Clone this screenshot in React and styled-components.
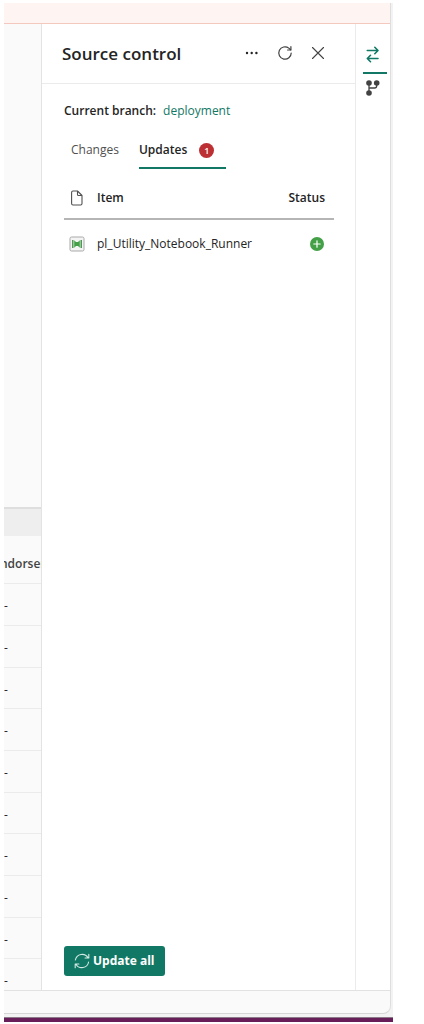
import React, { useState } from 'react';
import styled, { createGlobalStyle } from 'styled-components';

const GlobalStyle = createGlobalStyle`
  *, *::before, *::after {
    box-sizing: border-box;
  }

  body {
    margin: 0;
    background: #ffffff;
    color: #242424;
    font-family: "Open Sans", "Noto Sans", sans-serif;
    font-size: 12px;
    line-height: 16px;
  }

  button {
    font: inherit;
    color: inherit;
    border: 0;
    padding: 0;
    background: none;
    cursor: pointer;
  }
`;

const Page = styled.div`
  min-height: 100vh;
  display: flex;
  flex-direction: column;
  padding: 3px 31px 2px 4px;
`;

const Frame = styled.div`
  flex: 1;
  display: flex;
  flex-direction: column;
  padding: 0 2px 3px 0;
  background: #f3f3f3;
`;

const Window = styled.div`
  flex: 1;
  display: flex;
  flex-direction: column;
  border-right: 1px solid #dedede;
  border-bottom: 1px solid #d6d6d6;
  border-bottom-right-radius: 8px;
  background: #fafafa;
`;

const Banner = styled.div`
  height: 21px;
  background: #fef4f1;
  border-bottom: 1px solid #f3c9bf;
`;

const Body = styled.div`
  flex: 1;
  display: grid;
  grid-template-columns: 37px minmax(0, 1fr) 34px;
  border-bottom: 1px solid #e2e2e2;
`;

const Footer = styled.footer`
  height: 22px;
`;

const Taskbar = styled.div`
  height: 5px;
  background: #671e59;
  border-top: 1px solid #8d7a88;
`;

const Workspace = styled.div`
  display: flex;
  flex-direction: column;
  justify-content: flex-end;
  overflow: hidden;
`;

const Toolbar = styled.div`
  height: 29px;
  background: #eeeeee;
  border-top: 2px solid #dedede;
`;

const List = styled.table`
  width: 100%;
  table-layout: fixed;
  border-collapse: collapse;
`;

const ListHead = styled.th`
  height: 47px;
  padding: 10px 0 0;
  overflow: hidden;
  white-space: nowrap;
  text-align: left;
  text-indent: -4px;
  font-weight: 600;
  color: #424242;
  border-bottom: 1px solid #ebebeb;
`;

const ListRow = styled.tr`
  height: 42px;

  &:nth-child(3n) {
    height: 41px;
  }

  &:last-child {
    height: 32px;
  }
`;

const ListCell = styled.td`
  padding: 14px 0 0;
  vertical-align: top;
  border-bottom: 1px solid #ebebeb;

  ${ListRow}:last-child & {
    border-bottom: 0;
  }
`;

const Panel = styled.section`
  display: flex;
  flex-direction: column;
  background: #ffffff;
  border-left: 1px solid #e3e3e3;
  border-right: 1px solid #ebebeb;
`;

const PanelHeader = styled.header`
  height: 60px;
  display: flex;
  align-items: center;
  justify-content: space-between;
  padding: 0 29px 0 20px;
  border-bottom: 1px solid #ebebeb;
`;

const Title = styled.h2`
  margin: 0;
  font-size: 17px;
  line-height: 24px;
  font-weight: 600;
`;

const Actions = styled.div`
  display: flex;
  gap: 17px;
`;

const IconButton = styled.button`
  width: 16px;
  height: 18px;
  display: flex;
  justify-content: center;
`;

const Content = styled.div`
  flex: 1;
  display: flex;
  flex-direction: column;
  align-items: flex-start;
  padding: 19px 21px 14px 22px;
`;

const Branch = styled.p`
  margin: 0;
  display: flex;
  gap: 7px;
`;

const BranchLabel = styled.span`
  font-weight: 600;
`;

const BranchLink = styled.a`
  color: #117865;
  text-decoration: none;
`;

const Tabs = styled.div`
  display: flex;
  gap: 20px;
  margin-top: 14px;
  padding-left: 7px;
`;

const Tab = styled.button`
  height: 36px;
  display: flex;
  align-items: center;
  gap: 12px;
  padding: ${(props) => (props.$badge ? '0 12px 0 0' : '0')};
  color: ${(props) => (props.$active ? '#242424' : '#505050')};
  font-weight: ${(props) => (props.$active ? 600 : 400)};
  border-bottom: 2px solid ${(props) => (props.$active ? '#117865' : 'transparent')};
`;

const Badge = styled.span`
  width: 15px;
  height: 15px;
  border-radius: 50%;
  background: #bc2f32;
  color: #ffffff;
  font-size: 9px;
  line-height: 15px;
  font-weight: 600;
  text-align: center;
`;

const Items = styled.table`
  width: 100%;
  margin-top: 9px;
  table-layout: fixed;
  border-collapse: collapse;

  th {
    height: 41px;
    padding: 0;
    text-align: left;
    font-weight: 600;
    border-bottom: 2px solid #b5b5b5;
  }

  td {
    height: 48px;
    padding: 0;
  }

  th:first-child,
  td:first-child {
    width: 33px;
    padding-left: 5px;
  }

  th:last-child,
  td:last-child {
    width: 60px;
    padding-right: 9px;
    text-align: right;
  }

  svg {
    display: inline-block;
    vertical-align: middle;
  }
`;

const UpdateButton = styled.button`
  height: 30px;
  display: flex;
  align-items: center;
  gap: 3px;
  margin-top: auto;
  padding: 0 10px;
  border-radius: 3px;
  background: #117865;
  color: #ffffff;
  font-weight: 700;
`;

const Rail = styled.nav`
  display: flex;
  flex-direction: column;
  align-items: center;
  padding-top: 20px;
  padding-left: 4px;
  background: #ffffff;
`;

const RailButton = styled.button`
  width: 24px;
  height: 30px;
  display: flex;
  align-items: flex-start;
  padding: ${(props) => (props.$active ? 1 : 5)}px 0 0 2px;
  color: ${(props) => (props.$active ? '#117865' : '#424242')};
  border-bottom: 2px solid ${(props) => (props.$active ? '#117865' : 'transparent')};
`;

const MoreIcon = () => (
  <svg width="16" height="16" viewBox="0 0 16 16" fill="#242424" aria-hidden="true">
    <circle cx="3" cy="8" r="1.2" />
    <circle cx="7.7" cy="8" r="1.2" />
    <circle cx="12.4" cy="8" r="1.2" />
  </svg>
);

const RefreshIcon = () => (
  <svg width="16" height="16" viewBox="0 0 16 16" fill="none" stroke="#424242" strokeWidth="1.2" aria-hidden="true">
    <path d="M14.2 8A6.2 6.2 0 1 1 11.8 3.1L13.6 4.8" strokeLinecap="round" />
    <path d="M13.9 1.7V5H10.6" strokeLinecap="round" strokeLinejoin="round" />
  </svg>
);

const CloseIcon = () => (
  <svg width="16" height="16" viewBox="0 0 16 16" fill="none" stroke="#424242" strokeWidth="1.1" strokeLinecap="round" aria-hidden="true">
    <path d="M2.5 2.5L13.5 13.5M13.5 2.5L2.5 13.5" />
  </svg>
);

const SwapIcon = () => (
  <svg width="16" height="18" viewBox="0 0 16 18" fill="none" stroke="currentColor" strokeWidth="1.6" strokeLinecap="round" strokeLinejoin="round" aria-hidden="true">
    <path d="M2.3 5.5H12.6M9.8 2.3L13 5.5L9.8 8.7M13 13.5H2.8M5.5 10.3L2.3 13.5L5.5 16.7" />
  </svg>
);

const BranchIcon = () => (
  <svg width="16" height="18" viewBox="0 0 16 18" aria-hidden="true">
    <path d="M4 4V14M4 9H9.5Q11.7 9 11.7 6.8V4" fill="none" stroke="currentColor" strokeWidth="1.3" />
    <circle cx="4" cy="4" r="2.8" fill="currentColor" />
    <circle cx="11.7" cy="4" r="2.8" fill="currentColor" />
    <circle cx="4" cy="14" r="2.8" fill="currentColor" />
  </svg>
);

const FileIcon = () => (
  <svg width="15" height="18" viewBox="0 0 15 18" fill="none" stroke="#505050" strokeWidth="1.1" strokeLinejoin="round" aria-hidden="true">
    <path d="M4 2H8.5L13 6.5V14.6Q13 16 11.6 16H4Q2.6 16 2.6 14.6V3.4Q2.6 2 4 2Z" />
    <path d="M8.5 2V5.4Q8.5 6.5 9.6 6.5H13" />
  </svg>
);

const PipelineIcon = () => (
  <svg width="16" height="16" viewBox="0 0 16 16" aria-hidden="true">
    <rect x="1" y="1" width="14" height="14" rx="1.5" fill="#f4f4f4" stroke="#a9a9a9" />
    <path d="M3.8 4V12M12.2 4V12" stroke="#2f8a35" strokeWidth="1.3" />
    <path d="M5.2 4.2L7 6H9L10.8 4.2V11.8L9 10H7L5.2 11.8Z" fill="#43a047" />
  </svg>
);

const AddedIcon = () => (
  <svg width="16" height="16" viewBox="0 0 16 16" role="img" aria-label="Added">
    <circle cx="8" cy="8" r="7" fill="#43a047" />
    <path d="M8 4.8V11.2M4.8 8H11.2" stroke="#ffffff" strokeWidth="1.2" strokeLinecap="round" />
  </svg>
);

const SyncIcon = () => (
  <svg width="16" height="16" viewBox="0 0 16 16" fill="none" stroke="#d5e9e4" strokeWidth="1.1" strokeLinecap="round" strokeLinejoin="round" aria-hidden="true">
    <path d="M1.4 7A6.8 6.8 0 0 1 14 4.8M14.8 1.3V5H11.1" />
    <path d="M14.6 9A6.8 6.8 0 0 1 2 11.2M1.2 14.7V11H4.9" />
  </svg>
);

const rows = Array.from({ length: 10 }, (_, i) => i);

const updates = [{ name: 'pl_Utility_Notebook_Runner' }];

const App = () => {
  const [tab, setTab] = useState('updates');

  return (
    <>
      <GlobalStyle />
      <Page>
        <Frame>
          <Window>
            <Banner />
            <Body>
              <Workspace>
                <Toolbar />
                <List>
                  <thead>
                    <tr>
                      <ListHead>ndorsem</ListHead>
                    </tr>
                  </thead>
                  <tbody>
                    {rows.map((row) => (
                      <ListRow key={row}>
                        <ListCell>-</ListCell>
                      </ListRow>
                    ))}
                  </tbody>
                </List>
              </Workspace>

              <Panel>
                <PanelHeader>
                  <Title>Source control</Title>
                  <Actions>
                    <IconButton aria-label="More options"><MoreIcon /></IconButton>
                    <IconButton aria-label="Refresh"><RefreshIcon /></IconButton>
                    <IconButton aria-label="Close"><CloseIcon /></IconButton>
                  </Actions>
                </PanelHeader>
                <Content>
                  <Branch>
                    <BranchLabel>Current branch:</BranchLabel>
                    <BranchLink href="#deployment">deployment</BranchLink>
                  </Branch>
                  <Tabs role="tablist">
                    <Tab
                      role="tab"
                      aria-selected={tab === 'changes'}
                      $active={tab === 'changes'}
                      onClick={() => setTab('changes')}
                    >
                      Changes
                    </Tab>
                    <Tab
                      role="tab"
                      aria-selected={tab === 'updates'}
                      $active={tab === 'updates'}
                      $badge
                      onClick={() => setTab('updates')}
                    >
                      Updates
                      <Badge>{updates.length}</Badge>
                    </Tab>
                  </Tabs>
                  <Items>
                    <thead>
                      <tr>
                        <th aria-label="Type"><FileIcon /></th>
                        <th>Item</th>
                        <th>Status</th>
                      </tr>
                    </thead>
                    <tbody>
                      {updates.map((item) => (
                        <tr key={item.name}>
                          <td><PipelineIcon /></td>
                          <td>{item.name}</td>
                          <td><AddedIcon /></td>
                        </tr>
                      ))}
                    </tbody>
                  </Items>
                  <UpdateButton>
                    <SyncIcon />
                    Update all
                  </UpdateButton>
                </Content>
              </Panel>

              <Rail>
                <RailButton $active aria-label="Source control"><SwapIcon /></RailButton>
                <RailButton aria-label="Branches"><BranchIcon /></RailButton>
              </Rail>
            </Body>
            <Footer />
          </Window>
        </Frame>
        <Taskbar />
      </Page>
    </>
  );
};

export default App;
